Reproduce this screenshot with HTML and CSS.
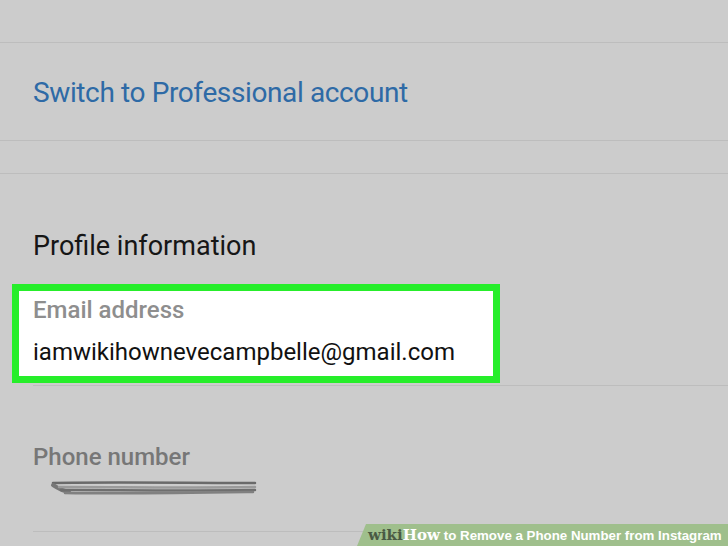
FILE: index.html
```html
<!DOCTYPE html>
<html>
<head>
<meta charset="utf-8">
<link rel="stylesheet" href="styles.css">
</head>
<body>
<div class="screen">
  <div class="row top"></div>
  <div class="row switch"><span class="link">Switch to Professional account</span></div>
  <div class="row spacer"></div>
  <div class="title">Profile information</div>
  <div class="highlight">
    <div class="label">Email address</div>
    <div class="value">iamwikihownevecampbelle@gmail.com</div>
  </div>
  <div class="divider"></div>
  <div class="phone">
    <div class="label dim">Phone number</div>
    <svg class="scribble" width="220" height="24" viewBox="0 0 220 24">
      <path d="M4 6 C60 5 140 6 206 6" stroke="#6a6a6a" stroke-width="2.5" fill="none" stroke-linecap="round"/>
      <path d="M4 8 C10 12 14 14 20 15" stroke="#777" stroke-width="4" fill="none" stroke-linecap="round"/>
      <path d="M10 10 C70 10 140 11 206 10" stroke="#9a9a9a" stroke-width="2.5" fill="none" stroke-linecap="round"/>
      <path d="M12 13 C70 13 140 14 206 13" stroke="#6e6e6e" stroke-width="2.5" fill="none" stroke-linecap="round"/>
      <path d="M16 16 C80 17 140 16 204 15" stroke="#808080" stroke-width="2.5" fill="none" stroke-linecap="round"/>
    </svg>
  </div>
  <div class="divider bottom"></div>
  <div class="banner"><span class="wiki">wiki</span><span class="how">How</span><span class="caption">to Remove a Phone Number from Instagram</span></div>
</div>
</body>
</html>
```
FILE: styles.css
```css
html, body {
  margin: 0;
  padding: 0;
  background: #cccccc;
}
.screen {
  position: relative;
  width: 728px;
  height: 546px;
  overflow: hidden;
  background: #cccccc;
  font-family: Roboto, "Liberation Sans", sans-serif;
}
.row {
  border-bottom: 1px solid #bdbdbd;
  box-sizing: border-box;
}
.top { height: 43px; }
.switch {
  height: 98px;
  display: flex;
  align-items: center;
  padding-left: 33px;
}
.link {
  color: #2e6aa6;
  font-size: 28px;
  letter-spacing: -0.38px;
  padding-top: 1px;
}
.spacer { height: 33px; }
.title {
  padding: 56px 0 0 33px;
  height: 54px;
  font-size: 27px;
  color: #161616;
}
.highlight {
  margin-left: 12px;
  width: 460px;
  height: 85px;
  border: 7px solid #26ee2a;
  background: #ffffff;
  padding-left: 14px;
  box-sizing: content-box;
}
.label {
  font-size: 24px;
  font-weight: 500;
  color: #8e8e8e;
  padding-top: 5px;
  height: 42px;
}
.value {
  font-size: 24px;
  color: #111;
}
.divider {
  margin-left: 33px;
  margin-top: 2px;
  border-bottom: 1px solid #bdbdbd;
}
.phone {
  padding: 57px 0 0 33px;
  height: 88px;
}
.label.dim {
  color: #777;
  padding-top: 0;
  height: 34px;
}
.scribble {
  display: block;
  margin-left: 16px;
  margin-top: 0;
}
.divider.bottom { margin-top: 0; }
.banner {
  position: absolute;
  right: 0;
  bottom: 0;
  width: 371px;
  height: 22px;
  background: #9fbf8c;
  clip-path: polygon(9px 0, 100% 0, 100% 100%, 0 100%);
  display: flex;
  align-items: center;
  padding-left: 11px;
  box-sizing: border-box;
  white-space: nowrap;
}
.wiki {
  font-family: "DejaVu Serif", "Liberation Serif", serif;
  font-weight: bold;
  font-size: 15px;
  color: #4a5a44;
}
.how {
  font-family: "DejaVu Serif", "Liberation Serif", serif;
  font-weight: bold;
  font-size: 15px;
  color: #ffffff;
}
.caption {
  font-family: "Liberation Sans", Arial, sans-serif;
  font-size: 13.3px;
  color: #ffffff;
  font-weight: bold;
  padding-left: 4px;
}
```
